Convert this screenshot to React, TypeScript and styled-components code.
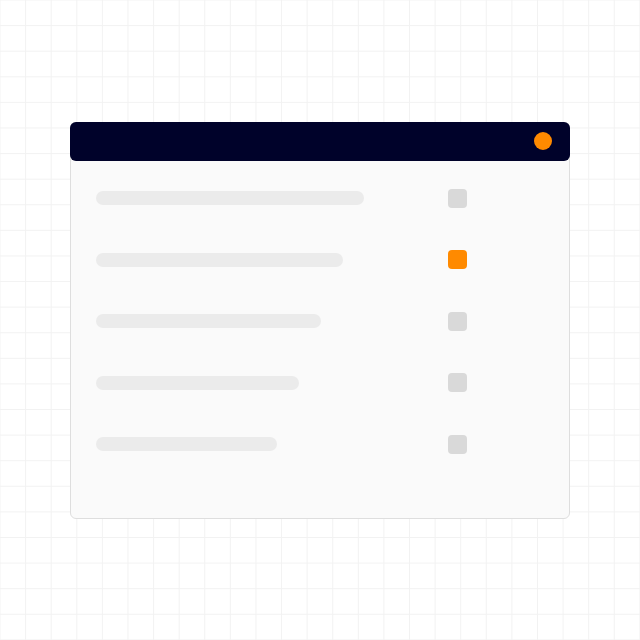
import React from 'react';
import styled, { createGlobalStyle } from 'styled-components';

const GlobalStyle = createGlobalStyle`
  html, body {
    margin: 0;
    padding: 0;
    font-family: "Inter", "Liberation Sans", sans-serif;
  }
`;

const Page = styled.div`
  width: 640px;
  height: 640px;
  display: flex;
  align-items: center;
  justify-content: center;
  background-color: #ffffff;
  background-image:
    linear-gradient(to right, transparent calc(100% - 1px), #f2f2f2 calc(100% - 1px)),
    linear-gradient(to bottom, transparent calc(100% - 1px), #f2f2f2 calc(100% - 1px));
  background-size: 25.6px 25.6px;
  background-position: 0.5px 0.5px;
`;

const Card = styled.div`
  width: 500px;
  height: 397px;
  display: flex;
  flex-direction: column;
  background: #fafafa;
  border: 1px solid #dedede;
  border-radius: 6px;
  box-sizing: border-box;
`;

const Header = styled.div`
  height: 39px;
  margin: -1px -1px 0;
  background: #00022a;
  border-radius: 6px;
  display: flex;
  align-items: center;
  justify-content: flex-end;
  padding-right: 18px;
  flex-shrink: 0;
`;

const Dot = styled.span`
  width: 18px;
  height: 18px;
  border-radius: 50%;
  background: #ff8a00;
`;

const List = styled.div`
  display: flex;
  flex-direction: column;
  gap: 42.5px;
  padding: 28px 0 0 25px;
`;

const Row = styled.div`
  display: grid;
  grid-template-columns: 352px 19px;
  align-items: center;
  height: 19px;
`;

const Bar = styled.div<{ $width: number }>`
  width: ${(p) => p.$width}px;
  height: 14px;
  border-radius: 7px;
  background: #ebebeb;
`;

const Check = styled.div<{ $active?: boolean }>`
  width: 19px;
  height: 19px;
  border-radius: 4px;
  background: ${(p) => (p.$active ? '#ff8a00' : '#d9d9d9')};
`;

const rows = [
  { width: 268, active: false },
  { width: 247, active: true },
  { width: 225, active: false },
  { width: 203, active: false },
  { width: 181, active: false },
];

const App = () => {
  return (
    <>
      <GlobalStyle />
      <Page>
        <Card>
          <Header>
            <Dot />
          </Header>
          <List>
            {rows.map((row, index) => (
              <Row key={index}>
                <Bar $width={row.width} />
                <Check $active={row.active} />
              </Row>
            ))}
          </List>
        </Card>
      </Page>
    </>
  );
};

export default App;
